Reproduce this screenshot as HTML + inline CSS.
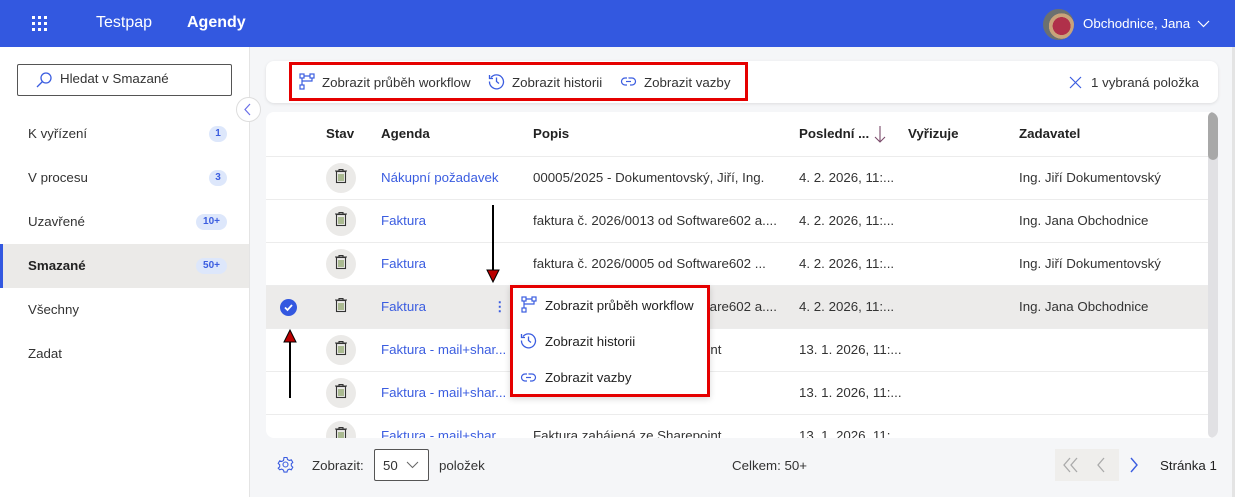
<!DOCTYPE html>
<html><head><meta charset="utf-8"><style>
*{box-sizing:border-box;margin:0;padding:0}
body{width:1235px;height:497px;overflow:hidden;font-family:"Liberation Sans",sans-serif;font-size:13.3px;color:#333;background:#f5f6f8;position:relative}
.a{position:absolute}
.hdr{left:0;top:0;width:1235px;height:47px;background:#3358e0;color:#fff}
.side{left:0;top:47px;width:250px;height:450px;background:#fff;border-right:1px solid #e4e4e4}
.si{left:28px;color:#333}
.badge{right:22px;height:16px;border-radius:8px;background:#dde7fb;color:#3b5de0;font-size:10px;font-weight:bold;line-height:16px;text-align:center}
.card{background:#fff;border-radius:8px}
.row{left:0;width:942px;height:43px;border-top:1px solid #ececec}
.c{position:absolute;top:0;line-height:42px;white-space:nowrap}
.lnk{color:#3b5de0}
.tr{position:absolute;left:60px;top:6px;width:30px;height:30px;border-radius:15px;background:#ebeae8}
.th{position:absolute;top:0;line-height:44px;font-weight:bold;color:#222}
</style></head><body>
<div class="a hdr">
 <svg class="a" style="left:32px;top:16px" width="16" height="16" viewBox="0 0 16 16" fill="#fff"><rect x="0" y="0" width="3" height="3"/><rect x="6" y="0" width="3" height="3"/><rect x="12" y="0" width="3" height="3"/><rect x="0" y="6" width="3" height="3"/><rect x="6" y="6" width="3" height="3"/><rect x="12" y="6" width="3" height="3"/><rect x="0" y="12" width="3" height="3"/><rect x="6" y="12" width="3" height="3"/><rect x="12" y="12" width="3" height="3"/></svg>
 <div class="a" style="left:96px;top:14px;font-size:16px">Testpap</div>
 <div class="a" style="left:187px;top:14px;font-size:16px;font-weight:bold">Agendy</div>
 <div class="a" style="left:1043px;top:9px;width:31px;height:31px;border-radius:50%;background:radial-gradient(circle at 60% 55%,#b0304a 0 35%,#c9a37a 36% 50%,#6b7070 51%)"></div>
 <div class="a" style="left:1083px;top:16px">Obchodnice, Jana</div>
 <svg class="a" style="left:1197px;top:20px" width="13" height="8" viewBox="0 0 13 8"><path d="M1 1l5.5 5.5L12 1" stroke="#fff" fill="none" stroke-width="1.2"/></svg>
</div>
<div class="a side">
 <div class="a" style="left:17px;top:17px;width:215px;height:32px;border:1px solid #555;border-radius:2px"></div>
 <svg class="a" style="left:36px;top:25px" width="16" height="16" viewBox="0 0 16 16"><circle cx="10" cy="6" r="5" stroke="#3b5de0" fill="none" stroke-width="1.3"/><path d="M6.5 9.5L1 15" stroke="#3b5de0" stroke-width="1.3"/></svg>
 <div class="a" style="left:60px;top:24px;color:#333">Hledat v Smazané</div>
 <div class="a si" style="top:79px">K vyřízení</div><div class="a badge" style="top:79px;width:18px">1</div>
 <div class="a si" style="top:123px">V procesu</div><div class="a badge" style="top:123px;width:18px">3</div>
 <div class="a si" style="top:167px">Uzavřené</div><div class="a badge" style="top:167px;width:31px">10+</div>
 <div class="a" style="left:0;top:197px;width:249px;height:44px;background:#ebeae8;border-left:3px solid #3358e0"></div>
 <div class="a si" style="top:211px;font-weight:bold;color:#222">Smazané</div><div class="a badge" style="top:211px;width:31px">50+</div>
 <div class="a si" style="top:255px">Všechny</div>
 <div class="a si" style="top:299px">Zadat</div>
</div>
<div class="a" style="left:236px;top:97px;width:25px;height:25px;border-radius:50%;background:#fff;border:1px solid #ddd"></div>
<svg class="a" style="left:244px;top:103px" width="8" height="13" viewBox="0 0 8 13"><path d="M6 1L1 6.5 6 12" stroke="#6a6fe8" fill="none" stroke-width="1.2"/></svg>

<div class="a card" style="left:266px;top:61px;width:952px;height:42px;box-shadow:0 1px 3px rgba(0,0,0,.1)"></div>
<div class="a" style="left:289px;top:62px;width:459px;height:39px;border:3px solid #e50000"></div>
<svg class="a" style="left:299px;top:73px" width="16" height="17" viewBox="0 0 16 17" fill="none" stroke="#3b5de0" stroke-width="1.2"><rect x="1" y="1" width="4" height="4"/><rect x="11" y="1" width="4" height="4"/><rect x="1" y="12" width="4" height="4"/><path d="M3 5v7M5 3h6M13 5v3H3"/></svg>
<div class="a" style="left:322px;top:75px">Zobrazit průběh workflow</div>
<svg class="a" style="left:488px;top:73px" width="17" height="17" viewBox="0 0 17 17" fill="none" stroke="#3b5de0" stroke-width="1.3"><path d="M3 4.5A7 7 0 1 1 1.5 8.5"/><path d="M1.5 2v3.5H5"/><path d="M8.5 4.5v4l2.5 2"/></svg>
<div class="a" style="left:512px;top:75px">Zobrazit historii</div>
<svg class="a" style="left:620px;top:75px" width="17" height="13" viewBox="0 0 17 13" fill="none" stroke="#3b5de0" stroke-width="1.2"><path d="M7 3H5a3.5 3.5 0 0 0 0 7h2M9 3.5a3.5 3.5 0 0 1 0-.5h3a3.5 3.5 0 0 1 0 7h-2"/><path d="M6 6.5h5"/></svg>
<div class="a" style="left:644px;top:75px">Zobrazit vazby</div>
<svg class="a" style="left:1069px;top:76px" width="13" height="13" viewBox="0 0 13 13"><path d="M1 1l11 11M12 1L1 12" stroke="#3b5de0" stroke-width="1.2"/></svg>
<div class="a" style="left:1091px;top:75px">1 vybraná položka</div>

<div class="a card" style="left:266px;top:112px;width:952px;height:326px;overflow:hidden">
 <div class="th" style="left:60px">Stav</div>
 <div class="th" style="left:115px">Agenda</div>
 <div class="th" style="left:267px">Popis</div>
 <div class="th" style="left:533px">Poslední ...</div>
 <svg class="a" style="left:608px;top:13px" width="12" height="19" viewBox="0 0 12 19"><path d="M6 1v16M1 12l5 5 5-5" stroke="#7a4a6a" fill="none" stroke-width="1.1"/></svg>
 <div class="th" style="left:642px">Vyřizuje</div>
 <div class="th" style="left:753px">Zadavatel</div>
 <div class="a" style="left:942px;top:0;width:10px;height:326px;background:#e1e1e4;border-radius:5px"></div>
 <div class="a" style="left:942px;top:0;width:10px;height:48px;background:#a8a8a8;border-radius:5px"></div>

 <div class="a row" style="top:44px"><div class="tr"></div><div class="c lnk" style="left:115px">Nákupní požadavek</div><div class="c" style="left:267px">00005/2025 - Dokumentovský, Jiří, Ing.</div><div class="c" style="left:533px">4. 2. 2026, 11:...</div><div class="c" style="left:753px">Ing. Jiří Dokumentovský</div></div>
 <div class="a row" style="top:87px"><div class="tr"></div><div class="c lnk" style="left:115px">Faktura</div><div class="c" style="left:267px">faktura č. 2026/0013 od Software602 a....</div><div class="c" style="left:533px">4. 2. 2026, 11:...</div><div class="c" style="left:753px">Ing. Jana Obchodnice</div></div>
 <div class="a row" style="top:130px"><div class="tr"></div><div class="c lnk" style="left:115px">Faktura</div><div class="c" style="left:267px">faktura č. 2026/0005 od Software602 ...</div><div class="c" style="left:533px">4. 2. 2026, 11:...</div><div class="c" style="left:753px">Ing. Jiří Dokumentovský</div></div>
 <div class="a row" style="top:173px;background:#ecebea"><div class="a" style="left:14px;top:13px;width:17px;height:17px;border-radius:50%;background:#3358e0"></div><svg class="a" style="left:17px;top:16px" width="11" height="11" viewBox="0 0 11 11"><path d="M2 5.5l2.5 2.5 4.5-5" stroke="#fff" fill="none" stroke-width="1.8"/></svg><div class="c lnk" style="left:115px">Faktura</div><div class="c lnk" style="left:227px;font-weight:bold">⋮</div><div class="c" style="left:267px">faktura č. 2026/0013 od Software602 a....</div><div class="c" style="left:533px">4. 2. 2026, 11:...</div><div class="c" style="left:753px">Ing. Jana Obchodnice</div></div>
 <div class="a row" style="top:216px"><div class="tr"></div><div class="c lnk" style="left:115px">Faktura - mail+shar...</div><div class="c" style="left:267px">Faktura zahájená ze Sharepoint</div><div class="c" style="left:533px">13. 1. 2026, 11:...</div></div>
 <div class="a row" style="top:259px"><div class="tr"></div><div class="c lnk" style="left:115px">Faktura - mail+shar...</div><div class="c" style="left:533px">13. 1. 2026, 11:...</div></div>
 <div class="a row" style="top:302px"><div class="tr"></div><div class="c lnk" style="left:115px">Faktura - mail+shar...</div><div class="c" style="left:267px">Faktura zahájená ze Sharepoint</div><div class="c" style="left:533px">13. 1. 2026, 11:...</div></div>
</div>
<svg width="0" height="0" style="position:absolute"><defs><g id="t"><path d="M1 3h12M5 3V1.5h4V3" stroke="#333" fill="none" stroke-width="1.1"/><rect x="2.5" y="3.5" width="9" height="11" stroke="#333" fill="none" stroke-width="1.1"/><path d="M5 6v7M7 6v7M9 6v7" stroke="#6a8a3a" stroke-width="1"/></g></defs></svg>
<svg class="a" style="left:334px;top:168px" width="14" height="16"><use href="#t"/></svg>
<svg class="a" style="left:334px;top:211px" width="14" height="16"><use href="#t"/></svg>
<svg class="a" style="left:334px;top:254px" width="14" height="16"><use href="#t"/></svg>
<svg class="a" style="left:334px;top:297px" width="14" height="16"><use href="#t"/></svg>
<svg class="a" style="left:334px;top:340px" width="14" height="16"><use href="#t"/></svg>
<svg class="a" style="left:334px;top:383px" width="14" height="16"><use href="#t"/></svg>
<svg class="a" style="left:334px;top:426px;clip-path:inset(0 0 4px 0)" width="14" height="16"><use href="#t"/></svg>

<div class="a" style="left:510px;top:285px;width:200px;height:112px;background:#fff;border:3px solid #e50000;box-shadow:0 2px 6px rgba(0,0,0,.15)"></div>
<svg class="a" style="left:521px;top:296px" width="16" height="17" viewBox="0 0 16 17" fill="none" stroke="#3b5de0" stroke-width="1.2"><rect x="1" y="1" width="4" height="4"/><rect x="11" y="1" width="4" height="4"/><rect x="1" y="12" width="4" height="4"/><path d="M3 5v7M5 3h6M13 5v3H3"/></svg>
<div class="a" style="left:545px;top:298px;color:#222">Zobrazit průběh workflow</div>
<svg class="a" style="left:520px;top:332px" width="17" height="17" viewBox="0 0 17 17" fill="none" stroke="#3b5de0" stroke-width="1.3"><path d="M3 4.5A7 7 0 1 1 1.5 8.5"/><path d="M1.5 2v3.5H5"/><path d="M8.5 4.5v4l2.5 2"/></svg>
<div class="a" style="left:545px;top:334px;color:#222">Zobrazit historii</div>
<svg class="a" style="left:520px;top:371px" width="17" height="13" viewBox="0 0 17 13" fill="none" stroke="#3b5de0" stroke-width="1.2"><path d="M7 3H5a3.5 3.5 0 0 0 0 7h2M9 3.5a3.5 3.5 0 0 1 0-.5h3a3.5 3.5 0 0 1 0 7h-2"/><path d="M6 6.5h5"/></svg>
<div class="a" style="left:545px;top:370px;color:#222">Zobrazit vazby</div>

<svg class="a" style="left:480px;top:200px" width="30" height="90"><path d="M13 5v68" stroke="#000" stroke-width="2"/><path d="M7 70l6 12 6-12z" fill="#b00" stroke="#000" stroke-width="1"/></svg>
<svg class="a" style="left:276px;top:325px" width="30" height="78"><path d="M14 15v58" stroke="#000" stroke-width="2"/><path d="M8 17l6-12 6 12z" fill="#b00" stroke="#000" stroke-width="1"/></svg>

<svg class="a" style="left:277px;top:456px" width="17" height="17" viewBox="0 0 17 17" fill="none" stroke="#3b5de0" stroke-width="1.1"><circle cx="8.5" cy="8.5" r="2.5"/><path d="M7 1.5h3l.5 2 1.8 1 2-.7 1.5 2.6-1.5 1.4v2l1.5 1.4-1.5 2.6-2-.7-1.8 1-.5 2H7l-.5-2-1.8-1-2 .7L1.2 12.2l1.5-1.4v-2L1.2 7.4l1.5-2.6 2 .7 1.8-1z"/></svg>
<div class="a" style="left:312px;top:458px">Zobrazit:</div>
<div class="a" style="left:374px;top:449px;width:55px;height:32px;border:1px solid #555;border-radius:2px;background:#fff"></div>
<div class="a" style="left:383px;top:458px">50</div>
<svg class="a" style="left:406px;top:461px" width="13" height="8" viewBox="0 0 13 8"><path d="M1 1l5.5 5.5L12 1" stroke="#666" fill="none"/></svg>
<div class="a" style="left:439px;top:458px">položek</div>
<div class="a" style="left:732px;top:458px">Celkem: 50+</div>
<div class="a" style="left:1055px;top:449px;width:64px;height:32px;background:#efeeec"></div>
<svg class="a" style="left:1062px;top:457px" width="18" height="16" viewBox="0 0 18 16"><path d="M8 1L2 8l6 7M15 1L9 8l6 7" stroke="#aaa" fill="none" stroke-width="1.3"/></svg>
<svg class="a" style="left:1096px;top:457px" width="10" height="16" viewBox="0 0 10 16"><path d="M8 1L2 8l6 7" stroke="#aaa" fill="none" stroke-width="1.3"/></svg>
<svg class="a" style="left:1129px;top:457px" width="10" height="16" viewBox="0 0 10 16"><path d="M2 1l6 7-6 7" stroke="#3b5de0" fill="none" stroke-width="1.4"/></svg>
<div class="a" style="left:1160px;top:458px;color:#222">Stránka 1</div>
<div class="a" style="left:1232px;top:47px;width:3px;height:450px;background:#e4e4e4"></div>
</body></html>
